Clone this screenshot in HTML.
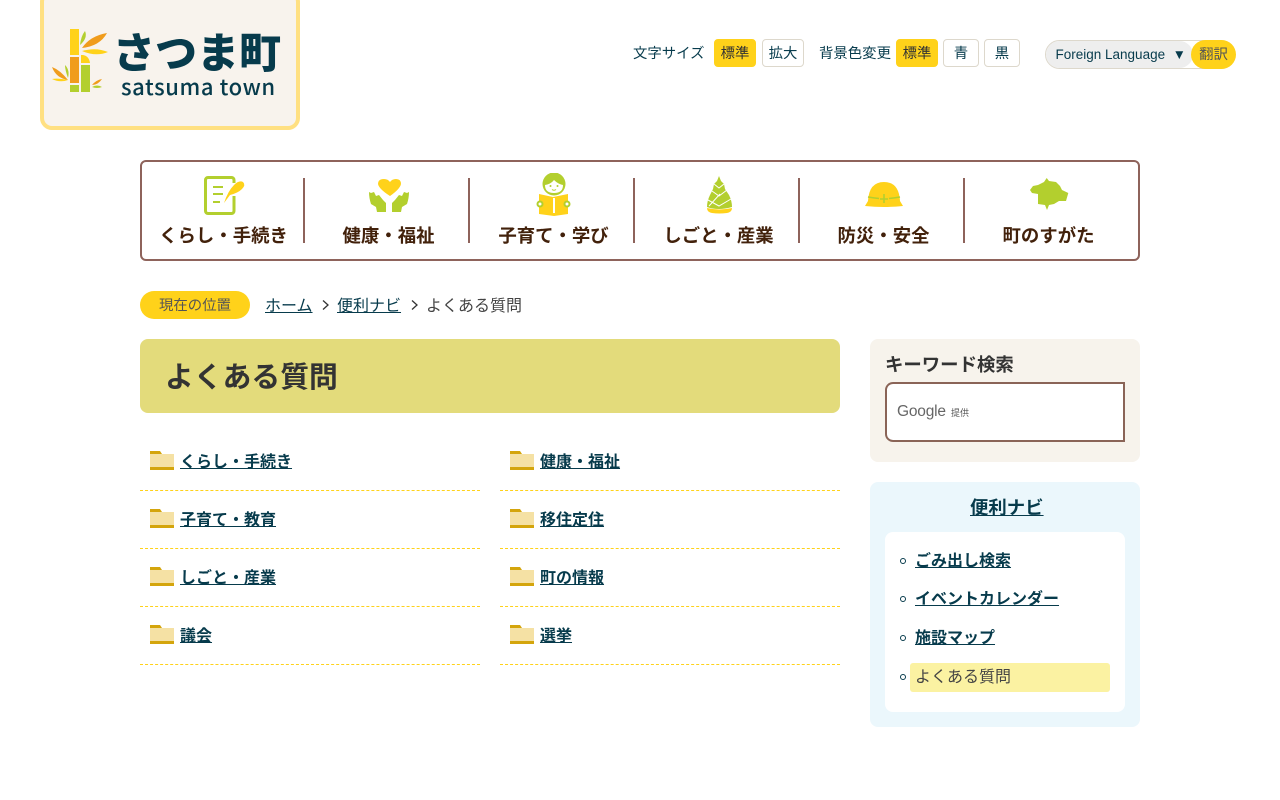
<!DOCTYPE html>
<html lang="ja"><head><meta charset="utf-8"><title>よくある質問</title>
<style>
*{box-sizing:border-box}
html,body{margin:0;padding:0;background:#fff;width:1280px;height:800px;overflow:hidden}
body{font-family:"Liberation Sans","Noto Sans CJK JP",sans-serif;color:#333;position:relative}
.a{position:absolute;white-space:nowrap}
a{color:#073b4c;text-decoration:underline}
.btn{position:absolute;top:39px;height:28px;border:1px solid #ddd8cc;border-radius:4px;background:#fff;color:#073b4c;font-size:14.4px;line-height:28px;text-align:center}
.btn.on{background:#ffd21a;border-color:#ffd21a;color:#333}
.nav{position:absolute;left:140px;top:160px;width:1000px;height:101px;border:2px solid #8e635b;border-radius:6px}
.sep{position:absolute;top:178px;width:2px;height:65px;background:#8e635b}
.nl{position:absolute;top:223px;width:165px;text-align:center;font-size:18.4px;font-weight:bold;color:#42210b;line-height:26px;white-space:nowrap}
.row{position:absolute;width:340px;height:58px;border-bottom:1px dashed #ffd21a}
.row svg{position:absolute;left:10px;top:18px}
.row a{position:absolute;left:40px;top:18px;font-size:16px;font-weight:bold;line-height:24px;white-space:nowrap}
.li{position:absolute;left:915px;font-size:16px;font-weight:bold;line-height:24px;white-space:nowrap}
.dot{position:absolute;left:900px;width:6px;height:6px;border:1px solid #073b4c;border-radius:50%}
</style></head><body>

<div class="a" style="left:40px;top:-10px;width:260px;height:140px;background:#f8f3ed;border:4px solid #ffe082;border-radius:12px"></div>
<svg class="a" style="left:50px;top:28px" width="60" height="66" viewBox="0 0 60 66">
<rect x="20" y="1" width="9" height="26" fill="#ffd21a"/><rect x="20" y="29" width="9" height="26" fill="#f09c1c"/><rect x="20" y="57" width="9" height="7" fill="#b3cf2e"/>
<rect x="31" y="37" width="9" height="27" fill="#b3cf2e"/><path d="M31 27h2q6 1 7 8h-9z" fill="#ffd21a"/>
<path d="M32 20Q40 8 57 5 50 18 32 20Z" fill="#f09c1c"/><path d="M32 23Q46 19 58 24 46 29 32 23Z" fill="#ffd21a"/><path d="M30 17Q31 8 35 3 38 10 30 17Z" fill="#b3cf2e"/>
<path d="M18 52Q10 42 2 39 6 50 18 52Z" fill="#f09c1c"/><path d="M18 52Q8 50 2 51 10 55 18 52Z" fill="#ffd21a"/><path d="M18 50Q15 42 15 37 20 42 18 50Z" fill="#b3cf2e"/>
<path d="M42 57Q46 52 52 51 48 57 42 57Z" fill="#f09c1c"/><path d="M42 59Q47 56 52 59 47 61 42 59Z" fill="#b3cf2e"/>
</svg>
<div class="a" style="left:113px;top:26px;font-size:42px;font-weight:900;color:#073b4c;line-height:50px;font-family:'Noto Sans CJK JP',sans-serif">さつま町</div>
<div class="a" style="left:121px;top:71px;font-size:22px;font-weight:500;color:#073b4c;line-height:30px;letter-spacing:.6px;font-family:'Noto Sans CJK JP',sans-serif">satsuma town</div>

<div class="a" style="left:633px;top:44px;font-size:14.4px;line-height:20px;color:#073b4c">文字サイズ</div>
<div class="btn on" style="left:714px;width:42px">標準</div>
<div class="btn" style="left:762px;width:42px">拡大</div>
<div class="a" style="left:819px;top:44px;font-size:14.4px;line-height:20px;color:#073b4c">背景色変更</div>
<div class="btn on" style="left:896px;width:42px">標準</div>
<div class="btn" style="left:943px;width:36px">青</div>
<div class="btn" style="left:984px;width:36px">黒</div>
<div class="a" style="left:1045px;top:40px;width:190px;height:29px;border:1px solid #ddd8cc;border-radius:15px;background:#fff"></div>
<div class="a" style="left:1046px;top:41px;width:147px;height:27px;background:#eee;border-radius:14px;color:#073b4c;font-size:13.5px;line-height:27px;padding-left:9.5px">Foreign Language &nbsp;▼</div>
<div class="a" style="left:1191px;top:40px;width:45px;height:29px;border-radius:15px;background:#ffd21a;color:#555;font-size:14.4px;line-height:31px;text-align:center">翻訳</div>

<div class="nav"></div>
<div class="sep" style="left:303px"></div><div class="sep" style="left:468px"></div><div class="sep" style="left:633px"></div><div class="sep" style="left:798px"></div><div class="sep" style="left:963px"></div>
<div class="nl" style="left:141px">くらし・手続き</div>
<div class="nl" style="left:306px">健康・福祉</div>
<div class="nl" style="left:471px">子育て・学び</div>
<div class="nl" style="left:636px">しごと・産業</div>
<div class="nl" style="left:801px">防災・安全</div>
<div class="nl" style="left:966px">町のすがた</div>

<svg class="a" style="left:200px;top:174px" width="48" height="42" viewBox="0 0 48 42">
<path d="M34 9V6a2.500 2.500 0 0 0-2.500-2.500H8A2.500 2.500 0 0 0 5.500 6v31A2.500 2.500 0 0 0 8 39.500h23.500A2.500 2.500 0 0 0 34 37V22" fill="none" stroke="#b3cf2e" stroke-width="3"/>
<path d="M13 13h10M13 20h10M13 28h7" stroke="#b3cf2e" stroke-width="2" fill="none"/>
<path d="M24 29Q28 17 34 11 39 6 43 8 46 11 42 15 38 19 30 21Z" fill="#ffd21a"/></svg>
<svg class="a" style="left:366px;top:176px" width="46" height="38" viewBox="0 0 46 38">
<path d="M24 20Q13 13 12 8 12 3 18 3 22 3 24 6 26 3 30 3 35 3 35 8 34 13 24 20Z" fill="#ffd21a"/>
<path d="M3 16l2 1 3-1 2 4 3-1 4 5 3 3v9h-9l-1-5-5-3Q3 22 3 16Z" fill="#b3cf2e"/>
<path d="M43 16l-2 1-3-1-2 4-3-1-4 5-3 3v9h9l1-5 5-3Q43 22 43 16Z" fill="#b3cf2e"/></svg>
<svg class="a" style="left:535px;top:173px" width="38" height="44" viewBox="0 0 38 44">
<circle cx="19" cy="11" r="11.500" fill="#b3cf2e"/><path d="M10 12Q16 11 19 7 23 11 28 12 28 20 19 20 10 20 10 12Z" fill="#fff"/>
<circle cx="15.500" cy="13" r="1" fill="#b3cf2e"/><circle cx="22.500" cy="13" r="1" fill="#b3cf2e"/><path d="M17 16.500q2 1.500 4 0" stroke="#b3cf2e" fill="none"/>
<path d="M4 21L18 24 33 21V41L19 43 4 41Z" fill="#ffd21a"/><rect x="18" y="25" width="2" height="15" fill="#fff"/>
<circle cx="5" cy="31" r="2.500" fill="#fff" stroke="#b3cf2e" stroke-width="2"/><circle cx="32" cy="31" r="2.500" fill="#fff" stroke="#b3cf2e" stroke-width="2"/></svg>
<svg class="a" style="left:705px;top:175px" width="28" height="40" viewBox="0 0 28 40">
<path d="M14 1L16 6 19 9 20 14 24 20Q27 26 27 32 20 34 14 34 7 34 2 32 2 26 5 20L8 14 9 9 12 6Z" fill="#b3cf2e"/>
<path d="M9 9L14 13 19 9M7 16L14 21 22 15M3 25L14 31 26 24M4 31L15 19" stroke="#fff" stroke-width="1" fill="none"/>
<path d="M2 33Q14 36 27 33 27 37 22 38 14 39 7 38 2 37 2 33Z" fill="#ffd21a"/></svg>
<svg class="a" style="left:864px;top:181px" width="40" height="28" viewBox="0 0 40 28">
<path d="M1 25L4 20Q5 1 20 1 35 1 36 20L39 25Q20 27 1 25Z" fill="#ffd21a"/>
<path d="M4 16Q10 17 15 17.500M25 17.500Q30 17 36 16M20 13v9M16 18h8" stroke="#b3cf2e" stroke-width="1.600" fill="none"/></svg>
<svg class="a" style="left:1029px;top:177px" width="40" height="36" viewBox="0 0 40 36">
<path d="M1 13L4 9 9 8 15 5 17.700 1 20 4 27 5 31 9 33 13 39.300 16 37 24 30 24 25 27 20 28 18 33 16 28 9 27 9 17 3 16Z" fill="#b3cf2e"/></svg>

<div class="a" style="left:140px;top:291px;width:110px;height:28px;border-radius:14px;background:#ffd21a;font-size:14.4px;line-height:30px;text-align:center;color:#555">現在の位置</div>
<a class="a" href="#" style="left:265px;top:295px;font-size:16px;line-height:24px">ホーム</a>
<svg class="a" style="left:321px;top:299px" width="10" height="12"><path d="M2 1.500l5 4.500-5 4.500" stroke="#333" stroke-width="1.300" fill="none"/></svg>
<a class="a" href="#" style="left:337px;top:295px;font-size:16px;line-height:24px">便利ナビ</a>
<svg class="a" style="left:410px;top:299px" width="10" height="12"><path d="M2 1.500l5 4.500-5 4.500" stroke="#333" stroke-width="1.300" fill="none"/></svg>
<div class="a" style="left:426px;top:295px;font-size:16px;line-height:24px;color:#444">よくある質問</div>

<div class="a" style="left:140px;top:339px;width:700px;height:74px;border-radius:8px;background:#e3db7b"></div>
<div class="a" style="left:165px;top:358px;font-size:28.8px;line-height:40px;font-weight:bold;color:#333">よくある質問</div>

<div class="row" style="left:140px;top:433px"><svg width="24" height="20"><path d="M0 3h24v14H0z" fill="#f5e1a4"/><path d="M0 0h10l2 3H0zM0 16h24v3H0z" fill="#d4a50c"/></svg><a href="#">くらし・手続き</a></div>
<div class="row" style="left:500px;top:433px"><svg width="24" height="20"><path d="M0 3h24v14H0z" fill="#f5e1a4"/><path d="M0 0h10l2 3H0zM0 16h24v3H0z" fill="#d4a50c"/></svg><a href="#">健康・福祉</a></div>
<div class="row" style="left:140px;top:491px"><svg width="24" height="20"><path d="M0 3h24v14H0z" fill="#f5e1a4"/><path d="M0 0h10l2 3H0zM0 16h24v3H0z" fill="#d4a50c"/></svg><a href="#">子育て・教育</a></div>
<div class="row" style="left:500px;top:491px"><svg width="24" height="20"><path d="M0 3h24v14H0z" fill="#f5e1a4"/><path d="M0 0h10l2 3H0zM0 16h24v3H0z" fill="#d4a50c"/></svg><a href="#">移住定住</a></div>
<div class="row" style="left:140px;top:549px"><svg width="24" height="20"><path d="M0 3h24v14H0z" fill="#f5e1a4"/><path d="M0 0h10l2 3H0zM0 16h24v3H0z" fill="#d4a50c"/></svg><a href="#">しごと・産業</a></div>
<div class="row" style="left:500px;top:549px"><svg width="24" height="20"><path d="M0 3h24v14H0z" fill="#f5e1a4"/><path d="M0 0h10l2 3H0zM0 16h24v3H0z" fill="#d4a50c"/></svg><a href="#">町の情報</a></div>
<div class="row" style="left:140px;top:607px"><svg width="24" height="20"><path d="M0 3h24v14H0z" fill="#f5e1a4"/><path d="M0 0h10l2 3H0zM0 16h24v3H0z" fill="#d4a50c"/></svg><a href="#">議会</a></div>
<div class="row" style="left:500px;top:607px"><svg width="24" height="20"><path d="M0 3h24v14H0z" fill="#f5e1a4"/><path d="M0 0h10l2 3H0zM0 16h24v3H0z" fill="#d4a50c"/></svg><a href="#">選挙</a></div>

<div class="a" style="left:870px;top:339px;width:270px;height:123px;border-radius:8px;background:#f7f3ec"></div>
<div class="a" style="left:885px;top:352px;font-size:18.4px;line-height:26px;font-weight:bold;color:#333">キーワード検索</div>
<div class="a" style="left:885px;top:382px;width:240px;height:60px;background:#fff;border:2px solid #8a6457;border-radius:8px 0 0 8px"></div>
<div class="a" style="left:897px;top:402px;font-size:15.500px;line-height:20px;color:#666;letter-spacing:-.2px">Google</div>
<div class="a" style="left:951px;top:406px;font-size:9px;line-height:14px;color:#555">提供</div>

<div class="a" style="left:870px;top:482px;width:270px;height:245px;border-radius:8px;background:#ebf7fc"></div>
<a class="a" href="#" style="left:970px;top:495px;font-size:18.4px;line-height:26px;font-weight:bold">便利ナビ</a>
<div class="a" style="left:885px;top:532px;width:240px;height:180px;border-radius:8px;background:#fff"></div>
<div class="dot" style="top:558px"></div><a class="li" href="#" style="top:550px">ごみ出し検索</a>
<div class="dot" style="top:596px"></div><a class="li" href="#" style="top:588px">イベントカレンダー</a>
<div class="dot" style="top:635px"></div><a class="li" href="#" style="top:627px">施設マップ</a>
<div class="dot" style="top:674px"></div>
<div class="a" style="left:910px;top:663px;width:200px;height:29px;border-radius:3px;background:#fbf2a2"></div>
<div class="a" style="left:915px;top:666px;font-size:16px;line-height:24px;color:#444">よくある質問</div>
</body></html>
